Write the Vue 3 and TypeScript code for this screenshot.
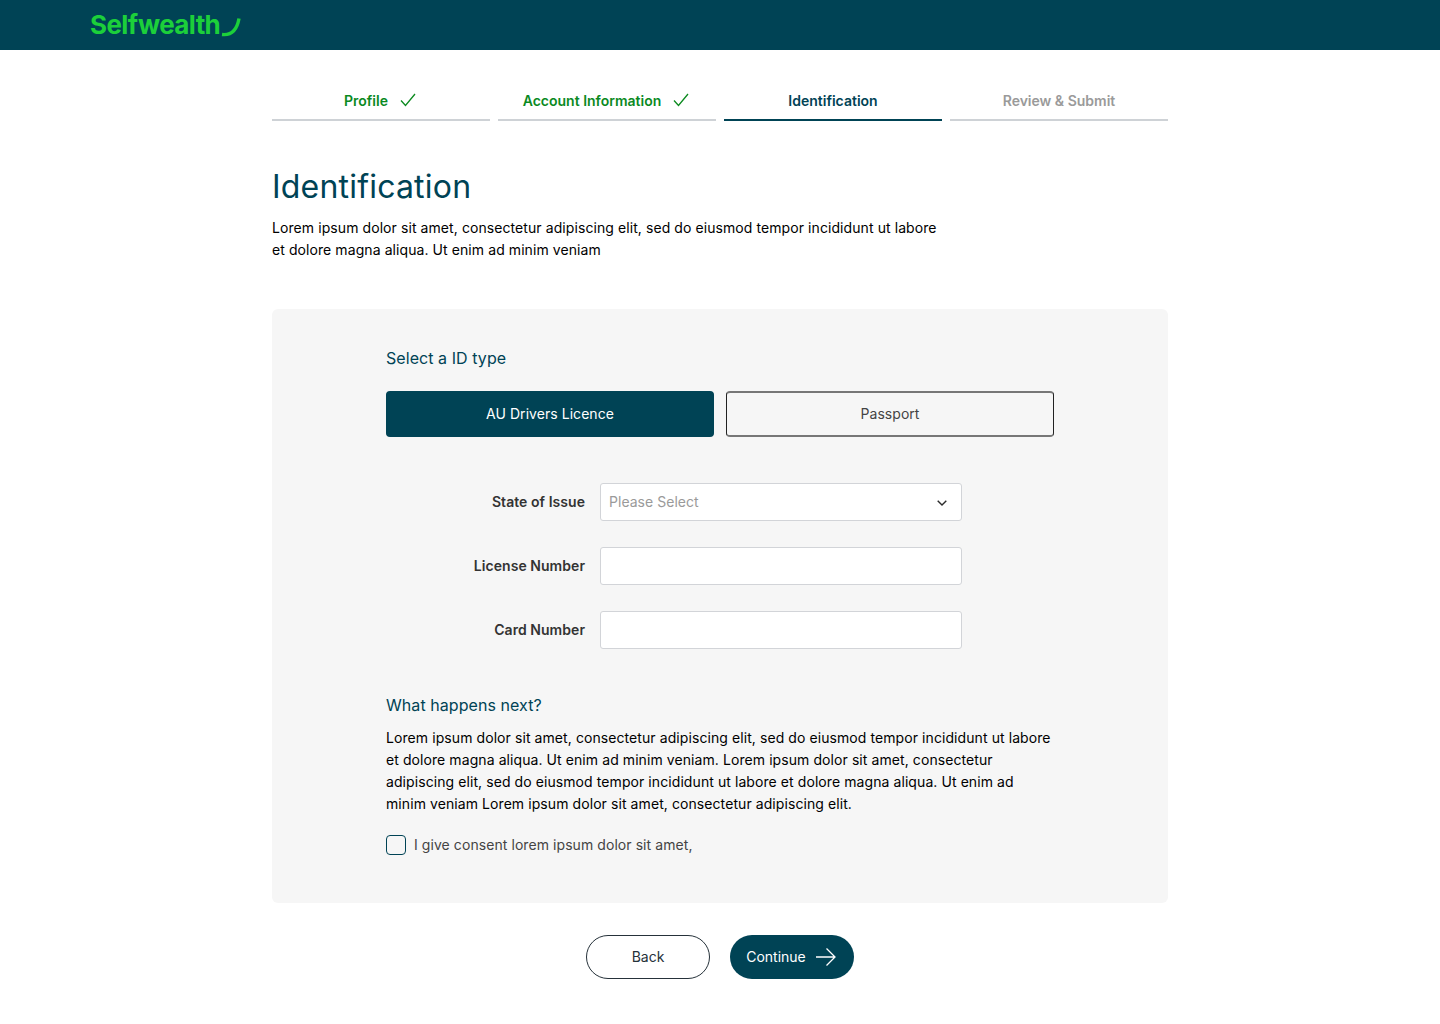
<script setup lang="ts">
const steps = [
  { label: 'Profile', state: 'done' },
  { label: 'Account Information', state: 'done' },
  { label: 'Identification', state: 'active' },
  { label: 'Review & Submit', state: 'todo' },
]
const fields = [
  { label: 'State of Issue', select: true },
  { label: 'License Number', select: false },
  { label: 'Card Number', select: false },
]
</script>

<template>
  <div class="page">
    <header class="topbar">
      <div class="logo">
        <span class="logo-text">Selfwealth</span>
        <svg class="logo-mark" width="20" height="20" viewBox="0 0 20 20" fill="none">
          <path d="M1 16.5C10 17.5 16 12 18 0.5" stroke="#1ccf3a" stroke-width="3.4" stroke-linecap="butt" />
        </svg>
      </div>
    </header>
    <main class="main">
      <nav class="steps">
        <div v-for="s in steps" :key="s.label" class="step" :class="s.state">
          <span>{{ s.label }}</span>
          <svg v-if="s.state === 'done'" width="16" height="14" viewBox="0 0 16 14" fill="none">
            <path d="M1 7.5L5.5 12.5L15 1" stroke="#0b8a1f" stroke-width="1.3" />
          </svg>
        </div>
      </nav>

      <h1 class="title">Identification</h1>
      <p class="intro">Lorem ipsum dolor sit amet, consectetur adipiscing elit, sed do eiusmod tempor incididunt ut labore et dolore magna aliqua. Ut enim ad minim veniam</p>

      <section class="panel">
        <h2 class="heading">Select a ID type</h2>
        <div class="types">
          <button class="type selected">AU Drivers Licence</button>
          <button class="type">Passport</button>
        </div>
        <div class="form">
          <div v-for="f in fields" :key="f.label" class="row">
            <label class="label">{{ f.label }}</label>
            <div class="input">
              <template v-if="f.select">
                <span class="placeholder">Please Select</span>
                <svg width="10" height="6" viewBox="0 0 10 6" fill="none">
                  <path d="M0.7 0.7L5 5L9.3 0.7" stroke="#2b2b2b" stroke-width="1.4" />
                </svg>
              </template>
            </div>
          </div>
        </div>
        <h2 class="heading next">What happens next?</h2>
        <p class="body">Lorem ipsum dolor sit amet, consectetur adipiscing elit, sed do eiusmod tempor incididunt ut labore et dolore magna aliqua. Ut enim ad minim veniam. Lorem ipsum dolor sit amet, consectetur adipiscing elit, sed do eiusmod tempor incididunt ut labore et dolore magna aliqua. Ut enim ad minim veniam Lorem ipsum dolor sit amet, consectetur adipiscing elit.</p>
        <div class="consent">
          <span class="check"></span>
          <span>I give consent lorem ipsum dolor sit amet,</span>
        </div>
      </section>

      <div class="actions">
        <button class="btn back">Back</button>
        <button class="btn continue">
          <span>Continue</span>
          <svg width="20" height="18" viewBox="0 0 20 18" fill="none">
            <path d="M0 9H19M10.5 0.5L19 9L10.5 17.5" stroke="#fff" stroke-width="1.3" />
          </svg>
        </button>
      </div>
    </main>
  </div>
</template>

<style>
html, body { margin: 0; background: #fff; }
</style>

<style scoped>
* { box-sizing: border-box; }
.page { font-family: Inter, "Liberation Sans", sans-serif; min-height: 1024px; background: #fff; }
.topbar { height: 50px; background: #004355; padding-left: 90px; display: flex; align-items: center; }
.logo { display: flex; align-items: center; height: 50px; }
.logo-text { font-size: 26px; font-weight: 700; color: #1ccf3a; letter-spacing: -0.6px; line-height: 50px; }
.logo-mark { margin-left: 1px; margin-top: 5px; }
.main { width: 896px; margin: 0 auto; }
.steps { display: grid; grid-template-columns: repeat(4, 1fr); gap: 8px; padding-top: 30px; }
.step { height: 41px; border-bottom: 2px solid #ced2d6; display: flex; align-items: center; justify-content: center; gap: 12px; font-size: 14px; font-weight: 600; padding-top: 1px; }
.step.done { color: #0b8a1f; padding-right: 2px; }
.step.active { color: #004355; border-bottom-color: #004355; }
.step.todo { color: #9a9a9a; }
.title { margin: 46px 0 0; font-size: 32px; font-weight: 400; letter-spacing: 0.2px; line-height: 40px; color: #004355; }
.intro { margin: 10px 0 0; width: 675px; font-size: 14px; letter-spacing: 0.08px; line-height: 22px; color: #000; }
.panel { margin-top: 48px; height: 594px; background: #f6f6f6; border-radius: 6px; padding: 38px 114px 0; }
.heading { margin: 0; font-size: 16px; font-weight: 400; letter-spacing: 0.06px; line-height: 22px; color: #004355; }
.types { display: grid; grid-template-columns: 1fr 1fr; gap: 12px; margin-top: 22px; }
.type { height: 46px; border-style: solid; border-width: 2px 1px; border-color: #777 #222; border-radius: 4px; background: transparent; font-family: inherit; font-size: 14px; font-weight: 400; letter-spacing: 0.05px; color: #444; padding: 0 0 1px; }
.type.selected { background: #004355; border-color: #004355; color: #fff; }
.form { margin-top: 46px; display: flex; flex-direction: column; gap: 26px; }
.row { display: flex; align-items: center; }
.label { width: 199px; text-align: right; font-size: 14px; font-weight: 600; letter-spacing: 0.05px; color: #333; padding-bottom: 1px; }
.input { margin-left: 15px; width: 362px; height: 38px; background: #fff; border: 1px solid #d2d4d8; border-radius: 3px; display: flex; align-items: center; justify-content: space-between; padding: 0 14px 0 8px; }
.input svg { margin-top: 1px; }
.placeholder { font-size: 14px; letter-spacing: 0.03px; color: #9a9a9a; padding-bottom: 1px; }
.next { margin-top: 45px; }
.body { margin: 11px 0 0; font-size: 14px; letter-spacing: 0.08px; line-height: 22px; color: #000; }
.consent { display: flex; align-items: center; gap: 8px; margin-top: 19px; font-size: 14px; letter-spacing: 0.07px; color: #444; line-height: 22px; }
.check { width: 20px; height: 20px; border: 1px solid #004355; border-radius: 4px; background: #fff0; }
.actions { display: flex; justify-content: center; gap: 20px; margin-top: 32px; }
.btn { width: 124px; height: 44px; border-radius: 22px; font-family: inherit; font-size: 14px; font-weight: 400; display: flex; align-items: center; justify-content: center; padding: 0 0 1px; }
.back { background: #fff; border: 1px solid #26323a; color: #26323a; }
.continue { background: #004355; border: none; color: #fff; gap: 10px; padding-right: 2px; }
</style>
